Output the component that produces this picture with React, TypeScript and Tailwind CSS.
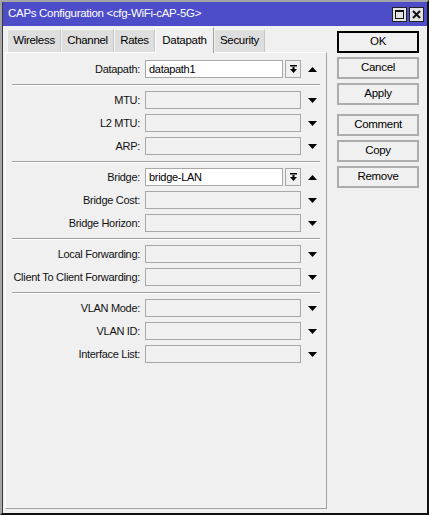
import React from 'react';

const FONT = { fontFamily: "'Liberation Sans', Arial, sans-serif", letterSpacing: '-0.3px' };

const TABS = ['Wireless', 'Channel', 'Rates', 'Datapath', 'Security'];
const TAB_W: Record<string, string> = {
  Wireless: 'w-[54px]',
  Channel: 'w-[53px]',
  Rates: 'w-[41px]',
  Datapath: 'w-[59px]',
  Security: 'w-[51px]',
};

type Row = { label: string; value?: string; picker?: boolean };

const GROUPS: Row[][] = [
  [{ label: 'Datapath', value: 'datapath1', picker: true }],
  [{ label: 'MTU' }, { label: 'L2 MTU' }, { label: 'ARP' }],
  [{ label: 'Bridge', value: 'bridge-LAN', picker: true }, { label: 'Bridge Cost' }, { label: 'Bridge Horizon' }],
  [{ label: 'Local Forwarding' }, { label: 'Client To Client Forwarding' }],
  [{ label: 'VLAN Mode' }, { label: 'VLAN ID' }, { label: 'Interface List' }],
];

function Triangle({ up }: { up?: boolean }) {
  return (
    <svg width="9" height="5" viewBox="0 0 9 5" className="block">
      {up ? <polygon points="0,5 9,5 4.5,0" fill="#000" /> : <polygon points="0,0 9,0 4.5,5" fill="#000" />}
    </svg>
  );
}

function PickerIcon() {
  return (
    <svg width="9" height="10" viewBox="0 0 9 10" className="block">
      <rect x="1" y="1" width="7" height="1.5" fill="#000" />
      <rect x="3.5" y="3" width="2" height="3" fill="#000" />
      <polygon points="1,5 8,5 4.5,9" fill="#000" />
    </svg>
  );
}

function FieldRow({ row }: { row: Row }) {
  return (
    <div className="flex items-center h-[18px]">
      <div className="w-[134px] text-right text-[11px] text-[#111] leading-none whitespace-nowrap">{row.label}:</div>
      <div className="ml-[5px] flex items-center">
        {row.picker ? (
          <>
            <div className="w-[138px] h-[18px] bg-white border border-[#a8a8a8] px-[3px] text-[11px] leading-[16px] text-black">
              {row.value}
            </div>
            <div className="ml-[2px] w-[16px] h-[18px] border border-[#a8a8a8] flex items-center justify-center">
              <PickerIcon />
            </div>
          </>
        ) : (
          <div className="w-[156px] h-[18px] border border-[#a8a8a8] bg-[#f0f0f0]" />
        )}
        <div className="ml-[6px] w-[10px] flex justify-center">
          <Triangle up={!!row.picker} />
        </div>
      </div>
    </div>
  );
}

function Separator() {
  return <div className="mx-[6px] mt-[6px] mb-[5px] border-t border-[#a0a0a0] border-b border-b-white" />;
}

function SideButton({ label, primary }: { label: string; primary?: boolean }) {
  return (
    <div
      className={`w-[82px] h-[22px] flex items-center justify-center text-[11.5px] text-black bg-[#f0f0f0] ${
        primary ? 'border-2 border-black' : 'border-2 border-[#adadad]'
      }`}
    >
      {label}
    </div>
  );
}

export default function App() {
  return (
    <div
      style={FONT}
      className="w-[429px] h-[515px] flex flex-col border-t-2 border-l-2 border-[#a6a6a6] border-r-2 border-b-2 border-r-[#111] border-b-[#111] bg-[#f0f0f0]"
    >
      <div className="flex-1 flex flex-col border-l border-[#3a3a3a]">
        {/* title bar */}
        <div className="h-[24px] bg-[#4d4dca] flex items-center pl-[5px] pr-[2px]">
          <span className="text-white text-[11.5px] flex-1">CAPs Configuration &lt;cfg-WiFi-cAP-5G&gt;</span>
          <div className="flex gap-[2px] mr-[1px]">
            <div className="w-[15px] h-[15px] bg-[#e3e3e3] border border-[#222] flex items-center justify-center">
              <div className="w-[9px] h-[9px] border border-[#111] border-t-2" />
            </div>
            <div className="w-[15px] h-[15px] bg-[#e3e3e3] border border-[#222] flex items-center justify-center">
              <svg width="9" height="9" viewBox="0 0 9 9">
                <path d="M1 1 L8 8 M8 1 L1 8" stroke="#111" strokeWidth="2" />
              </svg>
            </div>
          </div>
        </div>

        {/* body */}
        <div className="flex-1 flex pl-[2px] pb-[4px]">
          <div className="w-[322px] flex flex-col">
            <div className="h-[26px] flex items-end pl-[2px]">
              {TABS.map((t) => {
                const active = t === 'Datapath';
                return (
                  <div
                    key={t}
                    className={`${TAB_W[t]} flex items-center justify-center text-[11.5px] text-black border-t border-l border-r ${
                      active
                        ? 'h-[26px] bg-[#f0f0f0] border-t-white border-l-white border-r-[#a0a0a0] relative z-10 -mb-px'
                        : 'h-[23px] bg-[#dedede] border-t-[#f4f4f4] border-l-[#f4f4f4] border-r-[#c8c8c8]'
                    }`}
                  >
                    {t}
                  </div>
                );
              })}
            </div>
            <div className="flex-1 border-t border-l border-white border-r border-b border-r-[#a0a0a0] border-b-[#a0a0a0] pt-[7px]">
              {GROUPS.map((g, gi) => (
                <div key={gi}>
                  {gi > 0 && <Separator />}
                  <div className="flex flex-col gap-[5px]">
                    {g.map((r) => (
                      <FieldRow key={r.label} row={r} />
                    ))}
                  </div>
                </div>
              ))}
            </div>
          </div>

          <div className="ml-[10px] pt-[5px] flex flex-col gap-[4px]">
            <SideButton label="OK" primary />
            <SideButton label="Cancel" />
            <SideButton label="Apply" />
            <div className="h-[1px]" />
            <SideButton label="Comment" />
            <SideButton label="Copy" />
            <SideButton label="Remove" />
          </div>
        </div>
      </div>
    </div>
  );
}
